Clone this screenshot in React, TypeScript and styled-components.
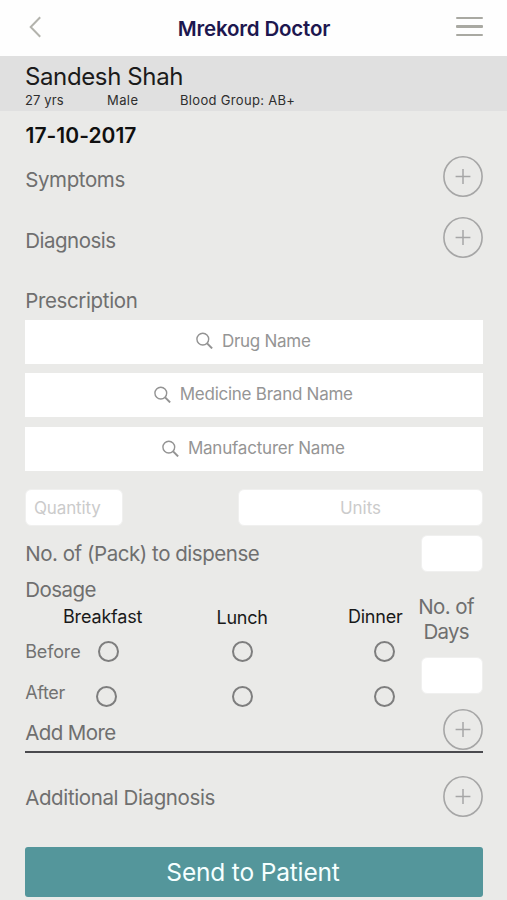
import React from "react";
import styled, { createGlobalStyle } from "styled-components";

const GlobalStyle = createGlobalStyle`
  *, *::before, *::after { box-sizing: border-box; }
  body {
    margin: 0;
    background: #eaeae8;
    font-family: Inter, "Liberation Sans", sans-serif;
    font-feature-settings: "calt" 0;
  }
  button { font: inherit; padding: 0; border: 0; background: none; display: block; }
`;

const Screen = styled.div`
  width: 507px;
  height: 900px;
  overflow: hidden;
  background: #eaeae8;
`;

const Header = styled.header`
  height: 56px;
  display: grid;
  grid-template-columns: 60px 1fr 60px;
  align-items: center;
  padding: 0 24px 0 25px;
  background: #fefefe;
`;

const Title = styled.h1`
  margin: 0;
  padding-top: 1px;
  text-align: center;
  font-size: 20.5px;
  line-height: 26px;
  font-weight: 600;
  letter-spacing: -0.18px;
  color: #1d174f;
`;

const BackButton = styled.button`
  justify-self: start;
  margin: -2px 0 0 3px;
`;

const MenuButton = styled.button`
  justify-self: end;
  width: 27px;
  display: grid;
  gap: 6px;
  margin-top: -3px;
`;

const MenuBar = styled.span`
  height: 2.4px;
  border-radius: 1px;
  background: #a9a9a2;
`;

const Patient = styled.section`
  height: 55px;
  padding: 8px 25px 0;
  background: #e0e0e0;
`;

const PatientName = styled.h2`
  margin: 0;
  font-size: 24px;
  line-height: 25px;
  font-weight: 400;
  letter-spacing: -0.38px;
  color: #1b1b1b;
`;

const PatientFacts = styled.div`
  display: grid;
  grid-template-columns: 82px 73px auto;
  font-size: 13px;
  line-height: 23px;
  color: #2e2e2e;
`;

const Fact = styled.span<{ $spacing: number }>`
  letter-spacing: ${(p) => p.$spacing}px;
`;

const Body = styled.main`
  padding: 0 24px 0 25px;
`;

const VisitDate = styled.div`
  padding: 4px 0 0 0.5px;
  height: 45px;
  font-size: 21px;
  line-height: 42px;
  font-weight: 600;
  letter-spacing: 0.03px;
  color: #101010;
`;

const Row = styled.div<{ $gap?: number }>`
  height: 41px;
  display: flex;
  align-items: center;
  justify-content: space-between;
  margin-bottom: ${(p) => p.$gap ?? 0}px;
`;

const Label = styled.span<{ $spacing?: number; $drop?: number }>`
  padding: ${(p) => p.$drop ?? 0}px 0 0 0.2px;
  font-size: 20.5px;
  line-height: 25px;
  letter-spacing: ${(p) => p.$spacing ?? -0.5}px;
  color: #6f6f6f;
  white-space: nowrap;
`;

const SectionHeading = styled.div`
  height: 61.5px;
  padding-top: 30px;
`;

const SearchList = styled.div`
  display: grid;
  gap: 9.6px;
  margin-bottom: 18.2px;
`;

const SearchField = styled.div`
  height: 44.2px;
  display: flex;
  align-items: center;
  justify-content: center;
  gap: 8.5px;
  padding: 0 1px 2px 0;
  background: #fff;
`;

const Placeholder = styled.span<{ $spacing: number; $faint?: boolean }>`
  font-size: 17px;
  line-height: 22px;
  letter-spacing: ${(p) => p.$spacing}px;
  color: ${(p) => (p.$faint ? "#cbcbcb" : "#959595")};
`;

const AmountRow = styled.div`
  display: flex;
  justify-content: space-between;
  margin-bottom: 8.5px;
`;

const Field = styled.div<{ $width: number; $centered?: boolean }>`
  width: ${(p) => p.$width}px;
  height: 37px;
  display: flex;
  align-items: center;
  justify-content: ${(p) => (p.$centered ? "center" : "flex-start")};
  padding: 0 8px;
  border: 1px solid #f0f0ef;
  border-radius: 6px;
  background: #fff;
`;

const DispenseRow = styled.div`
  height: 37px;
  display: flex;
  align-items: center;
  justify-content: space-between;
`;

const Dosage = styled.section`
  height: 137px;
  display: grid;
  grid-template-columns: 1fr 74px;
`;

const Schedule = styled.div`
  padding-top: 5px;
`;

const MealRow = styled.div`
  display: grid;
  grid-template-columns: 153.5px 131.5px auto;
  align-items: center;
  height: 22px;
  margin: 4px 0 13.5px;
  padding-left: 38px;
`;

const Meal = styled.span<{ $spacing: number; $drop?: boolean }>`
  padding-top: ${(p) => (p.$drop ? 1.5 : 0)}px;
  font-size: 18px;
  line-height: 20px;
  letter-spacing: ${(p) => p.$spacing}px;
  color: #191919;
`;

const ChoiceRow = styled.div`
  display: grid;
  grid-template-columns: 73px 134px 142.3px auto;
  align-items: center;
  height: 21px;
  margin-bottom: 23.2px;
`;

const ChoiceLabel = styled.span<{ $spacing: number; $lift: number }>`
  height: 20px;
  margin: ${(p) => -p.$lift}px 0 ${(p) => p.$lift}px;
  padding-left: 0.2px;
  font-size: 18px;
  line-height: 20px;
  letter-spacing: ${(p) => p.$spacing}px;
  color: #727272;
`;

const Radio = styled.span<{ $shift?: number }>`
  width: 21px;
  height: 21px;
  margin-left: ${(p) => p.$shift ?? 0}px;
  border: 2px solid #7e7e7e;
  border-radius: 50%;
`;

const Days = styled.div`
  display: flex;
  flex-direction: column;
  align-items: center;
  padding-top: 22px;
`;

const DaysField = styled.div`
  align-self: flex-end;
  margin-top: 13px;
`;

const AddMoreRow = styled(Row)`
  height: 44px;
  padding-bottom: 1px;
  border-bottom: 2px solid #4a4a4e;
  margin-bottom: 23px;
`;

const SendButton = styled.button`
  width: 100%;
  height: 50px;
  margin-top: 30px;
  padding-right: 2px;
  border-radius: 3px;
  background: #54969b;
  color: #f6ffff;
  font-size: 24.5px;
  line-height: 50px;
  letter-spacing: -0.17px;
`;

const Glyph = styled.svg`
  display: block;
  fill: none;
`;

const AddButton = () => (
  <button aria-label="Add">
    <Glyph width="40" height="41" viewBox="0 0 40 41" stroke="#a6a6a6">
      <ellipse cx="20" cy="20.5" rx="19.1" ry="19.7" strokeWidth="1.6" />
      <path d="M12.6 20.5h14.8M20 13v15" strokeWidth="1.5" />
    </Glyph>
  </button>
);

const SearchIcon = () => (
  <Glyph width="17" height="17" viewBox="0 0 17 17" stroke="#939393">
    <circle cx="6.8" cy="7.1" r="5.9" strokeWidth="1.4" />
    <path d="M11.1 11.4l5 5" strokeWidth="2" />
  </Glyph>
);

const searches = [
  { text: "Drug Name", spacing: -0.28 },
  { text: "Medicine Brand Name", spacing: -0.25 },
  { text: "Manufacturer Name", spacing: -0.21 },
];

export default function App() {
  return (
    <Screen>
      <GlobalStyle />
      <Header>
        <BackButton aria-label="Back">
          <Glyph width="14" height="22" viewBox="0 0 14 22" stroke="#b3b3ad" strokeWidth="2">
            <path d="M12.2 1.3L2.7 11l9.5 9.7" />
          </Glyph>
        </BackButton>
        <Title>Mrekord Doctor</Title>
        <MenuButton aria-label="Menu">
          <MenuBar />
          <MenuBar />
          <MenuBar />
        </MenuButton>
      </Header>
      <Patient>
        <PatientName>Sandesh Shah</PatientName>
        <PatientFacts>
          <Fact $spacing={0.12}>27 yrs</Fact>
          <Fact $spacing={0.4}>Male</Fact>
          <Fact $spacing={0.32}>Blood Group: AB+</Fact>
        </PatientFacts>
      </Patient>
      <Body>
        <VisitDate>17-10-2017</VisitDate>
        <Row $gap={20}>
          <Label $spacing={-0.39} $drop={6}>Symptoms</Label>
          <AddButton />
        </Row>
        <Row>
          <Label $spacing={-0.5} $drop={6}>Diagnosis</Label>
          <AddButton />
        </Row>
        <SectionHeading>
          <Label $spacing={-0.36}>Prescription</Label>
        </SectionHeading>
        <SearchList>
          {searches.map((s) => (
            <SearchField key={s.text}>
              <SearchIcon />
              <Placeholder $spacing={s.spacing}>{s.text}</Placeholder>
            </SearchField>
          ))}
        </SearchList>
        <AmountRow>
          <Field $width={98}>
            <Placeholder $spacing={-0.13} $faint>Quantity</Placeholder>
          </Field>
          <Field $width={245} $centered>
            <Placeholder $spacing={0} $faint>Units</Placeholder>
          </Field>
        </AmountRow>
        <DispenseRow>
          <Label $spacing={-0.46}>No. of (Pack) to dispense</Label>
          <Field $width={62} />
        </DispenseRow>
        <Dosage>
          <Schedule>
            <Label $spacing={-0.54}>Dosage</Label>
            <MealRow>
              <Meal $spacing={-0.16}>Breakfast</Meal>
              <Meal $spacing={-0.23} $drop>Lunch</Meal>
              <Meal $spacing={-0.24}>Dinner</Meal>
            </MealRow>
            <ChoiceRow>
              <ChoiceLabel $spacing={-0.14} $lift={0}>Before</ChoiceLabel>
              <Radio />
              <Radio />
              <Radio />
            </ChoiceRow>
            <ChoiceRow>
              <ChoiceLabel $spacing={-0.36} $lift={3}>After</ChoiceLabel>
              <Radio $shift={-2.3} />
              <Radio />
              <Radio />
            </ChoiceRow>
          </Schedule>
          <Days>
            <Label $spacing={-0.6}>No. of</Label>
            <Label $spacing={-0.73}>Days</Label>
            <DaysField>
              <Field $width={62} />
            </DaysField>
          </Days>
        </Dosage>
        <AddMoreRow>
          <Label $spacing={-0.6} $drop={7}>Add More</Label>
          <AddButton />
        </AddMoreRow>
        <Row>
          <Label $spacing={-0.38} $drop={2}>Additional Diagnosis</Label>
          <AddButton />
        </Row>
        <SendButton>Send to Patient</SendButton>
      </Body>
    </Screen>
  );
}
